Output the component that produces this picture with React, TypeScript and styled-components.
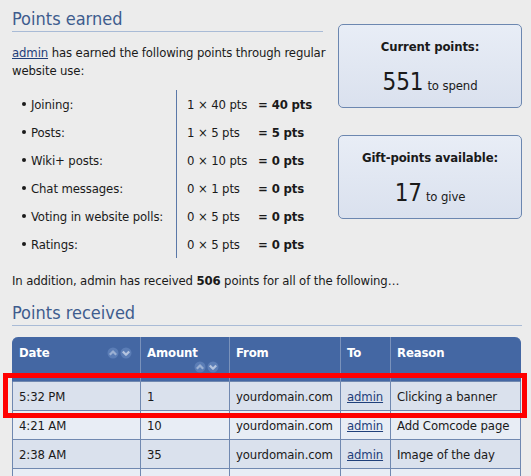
import React from "react";
import styled, { createGlobalStyle } from "styled-components";

const Global = createGlobalStyle`
  html, body { margin: 0; padding: 0; background: #ececec; overflow: hidden; }
  body { font-family: "DejaVu Sans Condensed", "DejaVu Sans", Verdana, sans-serif; font-size: 13px; color: #1a1a1a; letter-spacing: -0.12px; }
`;

const Page = styled.div`
  padding: 8px 9px 0 12px;
`;

const Top = styled.div`
  display: flex;
  gap: 15px;
`;

const Left = styled.div`
  flex: 1;
`;

const Heading = styled.h2`
  margin: 0;
  font-weight: normal;
  font-size: 18px;
  line-height: 22px;
  letter-spacing: 0;
  color: #3e5c8e;
  border-bottom: 1px solid #a9bbd6;
  padding-bottom: 1px;
`;

const Para = styled.p`
  margin: 12px -8px 0 0;
  line-height: 18px;
`;

const Link = styled.a`
  color: #1f3f7a;
  text-decoration: underline;
`;

const PointsGrid = styled.div`
  display: grid;
  grid-template-columns: 164px 82px auto;
  margin-top: 10px;
`;

const Label = styled.div`
  height: 28px;
  display: flex;
  align-items: center;
  padding-left: 10px;
  &::before {
    content: "";
    width: 4px;
    height: 4px;
    border-radius: 50%;
    background: #1a1a1a;
    margin-right: 5px;
  }
`;

const Calc = styled.div`
  height: 28px;
  display: flex;
  align-items: center;
  border-left: 1px solid #5a78a8;
  padding-left: 10px;
  white-space: nowrap;
`;

const Total = styled.div`
  height: 28px;
  display: flex;
  align-items: center;
  font-weight: bold;
  white-space: nowrap;
`;

const Addition = styled.p`
  margin: 14px 0 0;
  line-height: 18px;
`;

const Right = styled.div`
  width: 184px;
  display: flex;
  flex-direction: column;
  gap: 27px;
  padding-top: 16px;
`;

const Box = styled.div`
  height: 84px;
  box-sizing: border-box;
  border: 1px solid #6c87b0;
  border-radius: 5px;
  background: linear-gradient(#e8edf6, #dae1ee);
  display: flex;
  flex-direction: column;
  align-items: center;
  padding-top: 14px;
`;

const BoxTitle = styled.div`
  font-weight: bold;
  font-size: 13px;
  line-height: 16px;
`;

const BoxValue = styled.div`
  margin-top: 13px;
  display: flex;
  align-items: baseline;
  gap: 4px;
`;

const Big = styled.span`
  font-size: 24px;
  line-height: 28px;
`;

const Small = styled.span`
  font-size: 13px;
`;

const Section = styled.div`
  margin-top: 12px;
`;

const TableWrap = styled.div`
  position: relative;
  margin-top: 11px;
  width: 509px;
`;

const Table = styled.table`
  width: 509px;
  border-collapse: separate;
  border-spacing: 0;
  table-layout: fixed;
`;

const Th = styled.th<{ $pr: number }>`
  box-sizing: border-box;
  background: #4467a3;
  color: #fff;
  font-weight: bold;
  text-align: left;
  vertical-align: top;
  padding: 8px ${(p) => p.$pr}px 0 6px;
  height: 45px;
  border-right: 1px solid #7a92bb;
  border-bottom: 1px solid #7088b0;
  &:first-child { border-top-left-radius: 6px; border-left: 1px solid #4467a3; }
  &:last-child { border-top-right-radius: 6px; border-right: 1px solid #4467a3; }
`;

const HeadRow = styled.div`
  display: flex;
  justify-content: space-between;
  align-items: center;
  line-height: 16px;
`;

const SortLine = styled.div`
  display: flex;
  justify-content: flex-end;
`;

const Td = styled.td<{ $odd: boolean }>`
  box-sizing: border-box;
  background: ${(p) => (p.$odd ? "#dae1ed" : "#e8edf5")};
  height: 29px;
  padding: 0 6px;
  border-right: 1px solid #7088b0;
  border-bottom: 1px solid #7088b0;
  white-space: nowrap;
  overflow: hidden;
  &:first-child { border-left: 1px solid #7088b0; }
`;

const Highlight = styled.div`
  position: absolute;
  left: -9px;
  right: -6px;
  top: 36px;
  height: 45px;
  box-sizing: border-box;
  border: 5px solid #ff0000;
  pointer-events: none;
`;

const SortIcons = () => (
  <svg width="25" height="12" viewBox="0 0 25 12">
    <circle cx="6" cy="6" r="5.5" fill="#5b7db6" />
    <path d="M2.8 7.8 L6 4.4 L9.2 7.8" stroke="#9bb0d3" strokeWidth="2.2" fill="none" strokeLinejoin="round" />
    <circle cx="19" cy="6" r="5.5" fill="#5b7db6" />
    <path d="M15.8 4.4 L19 7.8 L22.2 4.4" stroke="#b4c4df" strokeWidth="2.2" fill="none" strokeLinejoin="round" />
  </svg>
);

const earned = [
  ["Joining:", "1 × 40 pts", "= 40 pts"],
  ["Posts:", "1 × 5 pts", "= 5 pts"],
  ["Wiki+ posts:", "0 × 10 pts", "= 0 pts"],
  ["Chat messages:", "0 × 1 pts", "= 0 pts"],
  ["Voting in website polls:", "0 × 5 pts", "= 0 pts"],
  ["Ratings:", "0 × 5 pts", "= 0 pts"],
];

const rows = [
  ["5:32 PM", "1", "yourdomain.com", "admin", "Clicking a banner"],
  ["4:21 AM", "10", "yourdomain.com", "admin", "Add Comcode page"],
  ["2:38 AM", "35", "yourdomain.com", "admin", "Image of the day"],
  ["1:05 AM", "5", "yourdomain.com", "admin", "Posting"],
];

const widths = [129, 89, 111, 50, 130];

export default function App() {
  return (
    <Page>
      <Global />
      <Top>
        <Left>
          <Heading>Points earned</Heading>
          <Para>
            <Link href="#">admin</Link> has earned the following points through regular website use:
          </Para>
          <PointsGrid>
            {earned.map(([a, b, c]) => (
              <React.Fragment key={a}>
                <Label>{a}</Label>
                <Calc>{b}</Calc>
                <Total>{c}</Total>
              </React.Fragment>
            ))}
          </PointsGrid>
        </Left>
        <Right>
          <Box>
            <BoxTitle>Current points:</BoxTitle>
            <BoxValue>
              <Big>551</Big>
              <Small>to spend</Small>
            </BoxValue>
          </Box>
          <Box>
            <BoxTitle>Gift-points available:</BoxTitle>
            <BoxValue>
              <Big>17</Big>
              <Small>to give</Small>
            </BoxValue>
          </Box>
        </Right>
      </Top>
      <Addition>
        In addition, admin has received <b>506</b> points for all of the following…
      </Addition>
      <Section>
        <Heading>Points received</Heading>
        <TableWrap>
          <Table>
            <colgroup>
              {widths.map((w, i) => (
                <col key={i} style={{ width: w }} />
              ))}
            </colgroup>
            <thead>
              <tr>
                <Th $pr={8}>
                  <HeadRow>
                    Date <SortIcons />
                  </HeadRow>
                </Th>
                <Th $pr={10}>
                  <HeadRow>Amount</HeadRow>
                  <SortLine>
                    <SortIcons />
                  </SortLine>
                </Th>
                <Th $pr={6}>
                  <HeadRow>From</HeadRow>
                </Th>
                <Th $pr={6}>
                  <HeadRow>To</HeadRow>
                </Th>
                <Th $pr={6}>
                  <HeadRow>Reason</HeadRow>
                </Th>
              </tr>
            </thead>
            <tbody>
              {rows.map((r, i) => (
                <tr key={i}>
                  <Td $odd={i % 2 === 0}>{r[0]}</Td>
                  <Td $odd={i % 2 === 0}>{r[1]}</Td>
                  <Td $odd={i % 2 === 0}>{r[2]}</Td>
                  <Td $odd={i % 2 === 0}>
                    <Link href="#">{r[3]}</Link>
                  </Td>
                  <Td $odd={i % 2 === 0}>{r[4]}</Td>
                </tr>
              ))}
            </tbody>
          </Table>
          <Highlight />
        </TableWrap>
      </Section>
    </Page>
  );
}
